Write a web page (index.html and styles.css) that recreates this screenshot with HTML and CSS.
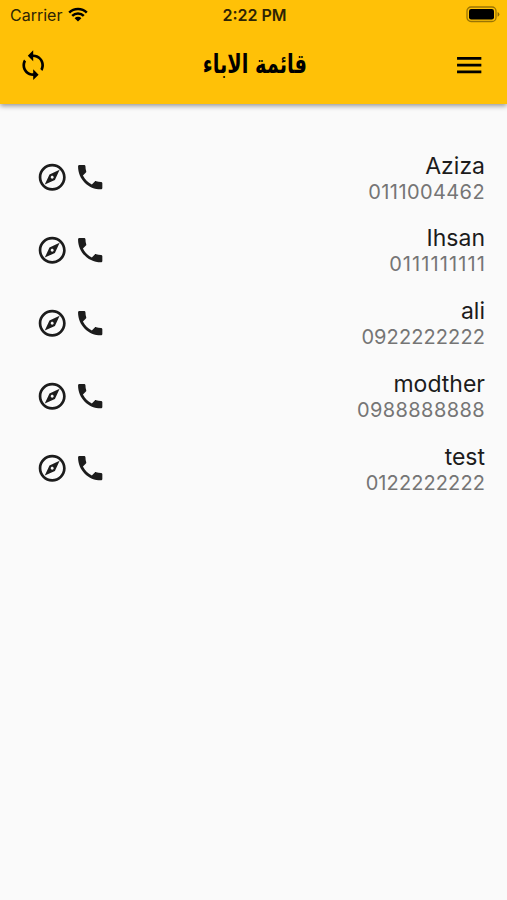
FILE: index.html
```
<!DOCTYPE html>
<html lang="ar">
<head>
    <meta charset="UTF-8">
    <meta name="viewport" content="width=device-width, initial-scale=1.0">
    <title>قائمة الاباء</title>
    <link rel="stylesheet" href="styles.css">
</head>
<body>

    <!-- Icon shapes -->
    <svg class="sprite">
        <symbol id="compass" viewBox="0 0 24 24">
            <path d="M12 2C6.48 2 2 6.48 2 12s4.48 10 10 10 10-4.48 10-10S17.52 2 12 2zm0 18c-4.41 0-8-3.59-8-8s3.59-8 8-8 8 3.59 8 8-3.59 8-8 8zm-5.5-2.5l7.51-3.49L17.5 6.5 9.99 9.99 6.5 17.5zm5.5-6.6c.61 0 1.1.49 1.1 1.1s-.49 1.1-1.1 1.1-1.1-.49-1.1-1.1.49-1.1 1.1-1.1z"/>
        </symbol>
        <symbol id="phone" viewBox="0 0 24 24">
            <path d="M20 15.5c-1.25 0-2.45-.2-3.57-.57-.35-.11-.74-.03-1.02.24l-2.2 2.2c-2.83-1.44-5.15-3.75-6.59-6.59l2.2-2.21c.28-.26.36-.65.25-1C8.7 6.45 8.5 5.25 8.5 4c0-.55-.45-1-1-1H4c-.55 0-1 .45-1 1 0 9.39 7.61 17 17 17 .55 0 1-.45 1-1v-3.5c0-.55-.45-1-1-1z"/>
        </symbol>
    </svg>

    <header class="header">
        <!-- Status bar -->
        <div class="status">
            <div class="carrier">
                <span>Carrier</span>
                <svg class="wifi" viewBox="0 0 20 15">
                    <path d="M1.2 5.6a12.5 12.5 0 0 1 17.6 0M4.2 8.8a8.2 8.2 0 0 1 11.6 0" fill="none" stroke="#000" stroke-width="2.5"/>
                    <path d="M6.6 11.2a4.8 4.8 0 0 1 6.8 0L10 14.6z"/>
                </svg>
            </div>
            <span class="clock">2:22 PM</span>
            <svg class="battery" viewBox="0 0 34 17">
                <rect x="1" y="1" width="29" height="14.5" rx="4" fill="none" stroke="#000" stroke-opacity=".4" stroke-width="1.3"/>
                <rect x="3" y="3" width="25" height="10.5" rx="2.2"/>
                <path d="M31.6 6v4.8q1.8-.9 1.8-2.4T31.6 6z" fill-opacity=".45"/>
            </svg>
        </div>

        <!-- App bar -->
        <div class="toolbar">
            <svg class="icon" viewBox="0 0 24 24">
                <path d="M12 4V1L8 5l4 4V6c3.31 0 6 2.69 6 6 0 1.01-.25 1.97-.7 2.8l1.46 1.46C19.54 15.03 20 13.57 20 12c0-4.42-3.58-8-8-8zm0 14c-3.31 0-6-2.69-6-6 0-1.01.25-1.97.7-2.8L5.24 7.74C4.46 8.97 4 10.43 4 12c0 4.42 3.58 8 8 8v3l4-4-4-4v3z"/>
            </svg>
            <h1 dir="rtl">قائمة الاباء</h1>
            <svg class="icon" viewBox="0 0 24 24">
                <path d="M3 18h18v-2H3v2zm0-5h18v-2H3v2zm0-7v2h18V6H3z"/>
            </svg>
        </div>
    </header>

    <!-- Parents list -->
    <ul class="list">
        <li class="row">
            <div class="actions">
                <svg class="icon"><use href="#compass"/></svg>
                <svg class="icon"><use href="#phone"/></svg>
            </div>
            <div class="parent">
                <div class="name">Aziza</div>
                <div class="number">0111004462</div>
            </div>
        </li>
        <li class="row">
            <div class="actions">
                <svg class="icon"><use href="#compass"/></svg>
                <svg class="icon"><use href="#phone"/></svg>
            </div>
            <div class="parent">
                <div class="name">Ihsan</div>
                <div class="number ones">0111111111</div>
            </div>
        </li>
        <li class="row">
            <div class="actions">
                <svg class="icon"><use href="#compass"/></svg>
                <svg class="icon"><use href="#phone"/></svg>
            </div>
            <div class="parent">
                <div class="name">ali</div>
                <div class="number twos">0922222222</div>
            </div>
        </li>
        <li class="row">
            <div class="actions">
                <svg class="icon"><use href="#compass"/></svg>
                <svg class="icon"><use href="#phone"/></svg>
            </div>
            <div class="parent">
                <div class="name">modther</div>
                <div class="number">0988888888</div>
            </div>
        </li>
        <li class="row">
            <div class="actions">
                <svg class="icon"><use href="#compass"/></svg>
                <svg class="icon"><use href="#phone"/></svg>
            </div>
            <div class="parent">
                <div class="name">test</div>
                <div class="number twos">0122222222</div>
            </div>
        </li>
    </ul>

</body>
</html>
```
FILE: styles.css
```
* {
    box-sizing: border-box;
}

body {
    margin: 0;
    min-height: 100vh;
    background-color: #fafafa;
    color: #1c1c1c;
    font-family: Inter, Roboto, "Liberation Sans", sans-serif;
}

.sprite {
    display: none;
}

.header {
    height: 103.5px;
    background-color: #ffc107;
    color: #000;
    box-shadow: 0 2px 5px rgba(0, 0, 0, 0.4);
}

.status {
    display: grid;
    grid-template-columns: 1fr auto 1fr;
    align-items: center;
    height: 28px;
    padding: 2px 8px 0 10px;
    font-size: 16px;
    line-height: 26px;
}

.carrier {
    display: flex;
    align-items: center;
    gap: 6px;
    color: #2e2404;
}

.wifi {
    width: 20px;
    height: 15px;
    margin-bottom: 1px;
}

.clock {
    font-weight: 600;
    color: #2e2404;
}

.battery {
    width: 34px;
    height: 17px;
    justify-self: end;
    margin-right: -1px;
    margin-bottom: 2px;
}

.toolbar {
    display: flex;
    justify-content: space-between;
    align-items: center;
    height: 75px;
    padding: 0 22px 0 17px;
}

/* narrow bold title */
.toolbar h1 {
    margin: 0 0 3px;
    font-family: "DejaVu Sans", sans-serif;
    font-size: 26px;
    font-weight: bold;
    line-height: 32px;
    transform: translateX(4px) scaleX(0.745);
}

.icon {
    width: 32.4px;
    height: 32.4px;
    fill: currentColor;
}

.list {
    margin: 0;
    padding: 48px 22px 0 36px;
    list-style: none;
}

.row {
    display: flex;
    justify-content: space-between;
    height: 72.8px;
}

.actions {
    display: flex;
    gap: 5.5px;
    padding-top: 9.8px;
}

.parent {
    text-align: right;
}

.name {
    font-size: 23px;
    line-height: 28px;
}

.number {
    font-size: 20px;
    line-height: 24px;
    letter-spacing: 0.4px;
    color: #757575;
}

.number.ones {
    letter-spacing: 1.1px;
    margin-right: -1px;
}

.number.twos {
    letter-spacing: 0.1px;
}
```
